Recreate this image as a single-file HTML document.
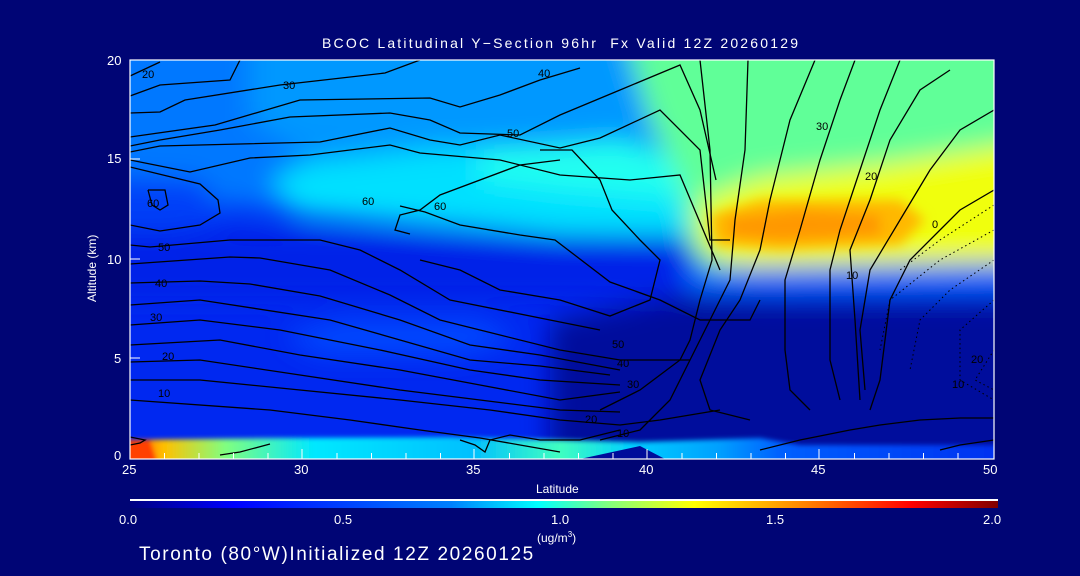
<!DOCTYPE html>
<html><head><meta charset="utf-8"><style>
html,body{margin:0;padding:0;background:#000575;}
body{width:1080px;height:576px;overflow:hidden;position:relative;font-family:"Liberation Sans",sans-serif;color:#fff;}
.t{position:absolute;font-size:13px;line-height:13px;white-space:nowrap;}
</style></head><body>
<div class="t" style="left:322px;top:37px;font-size:14px;letter-spacing:2.2px">BCOC Latitudinal Y&#8722;Section 96hr&nbsp; Fx Valid 12Z 20260129</div>
<div class="t" style="left:107px;top:54px">20</div>
<div class="t" style="left:107px;top:152px">15</div>
<div class="t" style="left:107px;top:253px">10</div>
<div class="t" style="left:114px;top:352px">5</div>
<div class="t" style="left:114px;top:449px">0</div>
<div class="t" style="left:86px;top:302px;transform:rotate(-90deg);transform-origin:0 0;font-size:12px">Altitude (km)</div>
<div class="t" style="left:122px;top:463px">25</div>
<div class="t" style="left:294px;top:463px">30</div>
<div class="t" style="left:466px;top:463px">35</div>
<div class="t" style="left:639px;top:463px">40</div>
<div class="t" style="left:811px;top:463px">45</div>
<div class="t" style="left:983px;top:463px">50</div>
<div class="t" style="left:536px;top:483px;font-size:12px">Latitude</div>
<div style="position:absolute;left:130px;top:499px;width:868px;height:2px;background:#fff"></div>
<div style="position:absolute;left:130px;top:501px;width:868px;height:7px;background:linear-gradient(90deg,#000080 0%,#0000ff 12%,#0080ff 37%,#00ffff 47%,#80ff80 55%,#ffff00 65%,#ff8000 78%,#ff0000 90%,#800000 100%)"></div>
<div class="t" style="left:119px;top:513px">0.0</div>
<div class="t" style="left:334px;top:513px">0.5</div>
<div class="t" style="left:551px;top:513px">1.0</div>
<div class="t" style="left:766px;top:513px">1.5</div>
<div class="t" style="left:983px;top:513px">2.0</div>
<div class="t" style="left:537px;top:528px;font-size:12px">(ug/m<sup style="font-size:8px">3</sup>)</div>
<div class="t" style="left:139px;top:545px;font-size:19px;line-height:19px;letter-spacing:1.6px">Toronto (80°W)Initialized 12Z 20260125</div>

<svg style="position:absolute;left:0;top:0" width="1080" height="576">
<defs>
<clipPath id="c"><rect x="130" y="60" width="864" height="399"/></clipPath>
<filter id="b" filterUnits="userSpaceOnUse" x="0" y="0" width="1080" height="576"><feGaussianBlur stdDeviation="13"/></filter>
<filter id="b2" filterUnits="userSpaceOnUse" x="0" y="0" width="1080" height="576"><feGaussianBlur stdDeviation="6"/></filter>
<filter id="b3" filterUnits="userSpaceOnUse" x="0" y="0" width="1080" height="576"><feGaussianBlur stdDeviation="2.5"/></filter>
<linearGradient id="bs" x1="0" y1="0" x2="1" y2="0">
<stop offset="0" stop-color="#ff3000"/><stop offset="0.05" stop-color="#ffc000"/><stop offset="0.12" stop-color="#80ff80"/><stop offset="0.22" stop-color="#00e8ff"/><stop offset="0.4" stop-color="#00c0ff"/><stop offset="0.5" stop-color="#40ffc0"/><stop offset="0.58" stop-color="#00d0ff"/><stop offset="0.68" stop-color="#00a0ff"/><stop offset="0.75" stop-color="#0060ff"/><stop offset="1" stop-color="#0030f0"/></linearGradient>
</defs>
<g clip-path="url(#c)">
<rect x="130" y="60" width="864" height="399" fill="#0028f0"/>
<g filter="url(#b)">
<polygon points="80,20 1040,20 1040,250 700,250 600,230 450,225 300,215 230,205 130,195 80,160" fill="#0078ff"/>
<polygon points="250,20 690,20 690,140 450,150 300,150 250,120" fill="#0098ff"/>
<polygon points="270,180 310,160 440,148 600,145 690,160 700,240 650,250 560,235 420,225 300,215" fill="#00e0ff"/>
<polygon points="480,150 620,140 690,160 690,200 560,190 480,180" fill="#20fff0"/>
<polygon points="80,175 200,180 230,220 130,240 80,240" fill="#0040f8"/>
<polygon points="80,230 1040,240 1040,300 80,300" fill="#0020e8"/>
<polygon points="620,20 1040,20 1040,275 900,285 800,290 720,278 690,250 680,180 650,120" fill="#60ff98"/>
<polygon points="700,200 760,178 880,165 1040,140 1040,262 900,272 800,272 720,262 700,240" fill="#f0ff10"/>
<polygon points="680,268 1040,262 1040,290 690,292" fill="#0068ff"/>
<polygon points="550,320 680,295 780,300 1040,300 1040,480 550,480" fill="#000c9c"/>
<polygon points="280,335 340,320 480,320 520,340 460,355 320,355" fill="#0048ff"/>
</g>
<g filter="url(#b2)">
<polygon points="710,215 760,200 900,200 925,220 900,245 780,250 715,245" fill="#ffb800"/>
<polygon points="730,218 800,210 880,215 880,235 780,240 730,235" fill="#ff9800"/>
</g>
<g filter="url(#b3)">
<polygon points="120,440 280,438 450,437 560,440 640,442 700,440 760,438 800,445 1000,445 1000,470 120,470" fill="url(#bs)"/>
<polygon points="120,441 150,440 160,470 120,470" fill="#ff4000"/>
</g>
<polygon points="580,459 640,446 665,459" fill="#000c9a"/>
<g fill="none" stroke="#000" stroke-width="1.3">
<polyline points="130,76 160,62"/>
<polyline points="130,96 160,85 230,80 240,60"/>
<polyline points="130,113 160,112 185,100 280,85 385,73 420,60"/>
<polyline points="130,137 215,125 300,100 430,98 460,107 500,95 540,80 580,68"/>
<polyline points="130,146 160,140 220,130 290,117 390,113 430,120 460,133 520,135 560,115 620,90 680,65 700,110 716,180"/>
<polyline points="130,152 160,146 320,142 390,128 430,140 460,145 500,135 560,148 600,138 660,110 700,150 710,240 730,240"/>
<polyline points="130,160 190,172 250,158 310,155 390,145 420,153 500,160 560,175 630,180 680,175 720,270"/>
<polyline points="130,167 200,184 218,200 220,213 200,225 160,231 130,225"/>
<polyline points="410,234 395,230 400,215 420,210 440,195 520,165 560,160"/>
<polyline points="400,206 425,212 460,225 520,235 555,240 610,282 660,300 700,320 750,320 760,300"/>
<polyline points="148,190 165,190 168,205 160,210 152,205 148,190"/>
<polyline points="130,245 150,247 230,240 320,240 360,250 400,270 450,300 550,320 600,330"/>
<polyline points="130,264 230,257 260,258 330,270 390,295 440,320 500,335 560,350 620,360 690,360"/>
<polyline points="130,283 200,281 250,284 320,296 400,320 470,345 540,355 620,370"/>
<polyline points="130,305 200,300 330,320 400,340 470,360 540,366 610,375"/>
<polyline points="130,325 200,320 280,330 380,350 470,370 540,380 620,385"/>
<polyline points="130,345 220,340 300,355 400,370 480,385 560,400 620,392"/>
<polyline points="130,362 200,360 300,375 400,390 480,400 560,410 620,412"/>
<polyline points="130,380 200,380 300,390 400,400 490,410 560,420 620,425 660,420 720,410"/>
<polyline points="130,400 270,410 350,420 420,430 480,438 520,445 560,452"/>
<polyline points="540,150 572,150 600,180 612,210 640,240 660,260 650,300 610,316 560,300 500,290 460,270 420,260"/>
<polyline points="700,60 710,150 712,260 700,300 690,340 680,360 640,390 600,410"/>
<polyline points="748,60 745,150 735,220 730,280 710,320 690,360 670,400 640,430 600,440"/>
<polyline points="815,60 790,120 770,200 760,250 740,300 720,330 700,380 710,410 750,420"/>
<polyline points="855,60 840,100 820,160 800,230 785,280 785,350 790,390 810,410"/>
<polyline points="900,60 880,110 860,170 840,230 830,270 830,360 840,400"/>
<polyline points="950,70 920,90 890,140 870,200 850,250 855,320 860,400"/>
<polyline points="994,110 960,130 930,170 900,220 870,270 860,330 865,390"/>
<polyline points="994,190 960,210 940,230 910,260 890,300 880,380 870,410"/>
<polyline points="130,445 140,443 145,440 130,437"/>
<polyline points="270,444 240,452 220,455"/>
<polyline points="460,440 475,445 485,452 490,440 510,435 540,440 580,440 620,430"/>
<polyline points="760,450 800,440 850,430 880,425 920,420 960,418 994,418"/>
<polyline points="940,450 960,445 994,440"/>
</g>
<g fill="none" stroke="#000" stroke-width="1" stroke-dasharray="1.5,3">
<polyline points="994,205 940,240 900,270"/>
<polyline points="994,230 940,260 890,300 880,350"/>
<polyline points="994,260 950,290 920,320 910,370"/>
<polyline points="994,300 960,330 960,380 994,400"/>
<polyline points="994,350 975,380 994,390"/>
</g>
<g font-family="Liberation Sans,sans-serif" font-size="11" fill="#000">
<text x="142" y="78">20</text><text x="283" y="89">30</text><text x="538" y="77">40</text>
<text x="507" y="137">50</text><text x="362" y="205">60</text><text x="434" y="210">60</text>
<text x="147" y="207">60</text><text x="158" y="251">50</text><text x="155" y="287">40</text>
<text x="150" y="321">30</text><text x="162" y="360">20</text><text x="158" y="397">10</text>
<text x="612" y="348">50</text><text x="617" y="367">40</text><text x="627" y="388">30</text>
<text x="585" y="423">20</text><text x="617" y="437">10</text>
<text x="816" y="130">30</text><text x="865" y="180">20</text><text x="932" y="228">0</text>
<text x="846" y="279">10</text><text x="971" y="363">20</text><text x="952" y="388">10</text>
</g>
</g>
<rect x="130" y="60" width="864" height="399" fill="none" stroke="#fff" stroke-width="1.2"/>
<g stroke="#fff" stroke-width="1">
<path d="M164.5 459v-6M199 459v-6M233.5 459v-6M268 459v-6M337 459v-6M371.5 459v-6M406 459v-6M440.5 459v-6M509.5 459v-6M544 459v-6M578.5 459v-6M613 459v-6M682 459v-6M716.5 459v-6M751 459v-6M785.5 459v-6M854.5 459v-6M889 459v-6M923.5 459v-6M958 459v-6M302 459v-10M474 459v-10M647 459v-10M819 459v-10"/>
<path d="M130 259h10M130 358h10M130 159h10"/>
</g>
</svg>
</body></html>
